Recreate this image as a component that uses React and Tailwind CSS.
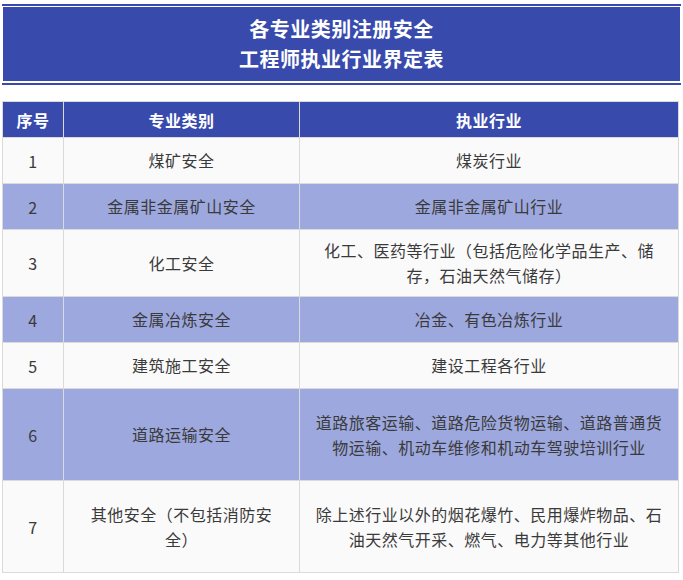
import React from 'react';

const rows = [
  { no: '1', type: ['煤矿安全'], scope: ['煤炭行业'], h: 'h-[46px]', alt: false },
  { no: '2', type: ['金属非金属矿山安全'], scope: ['金属非金属矿山行业'], h: 'h-[46px]', alt: true },
  {
    no: '3',
    type: ['化工安全'],
    scope: ['化工、医药等行业（包括危险化学品生产、储', '存，石油天然气储存）'],
    h: 'h-[67px]',
    alt: false,
  },
  { no: '4', type: ['金属冶炼安全'], scope: ['冶金、有色冶炼行业'], h: 'h-[46px]', alt: true },
  { no: '5', type: ['建筑施工安全'], scope: ['建设工程各行业'], h: 'h-[46px]', alt: false },
  {
    no: '6',
    type: ['道路运输安全'],
    scope: ['道路旅客运输、道路危险货物运输、道路普通货', '物运输、机动车维修和机动车驾驶培训行业'],
    h: 'h-[92px]',
    alt: true,
  },
  {
    no: '7',
    type: ['其他安全（不包括消防安', '全）'],
    scope: ['除上述行业以外的烟花爆竹、民用爆炸物品、石', '油天然气开采、燃气、电力等其他行业'],
    h: 'h-[92px]',
    alt: false,
  },
];

const Lines = ({ lines }) => (
  <div className="leading-[25px]">
    {lines.map((l, i) => (
      <div key={i}>{l}</div>
    ))}
  </div>
);

const Cell = ({ children, className = '' }) => (
  <div className={`flex items-center justify-center text-center border-r border-b border-[#dadada] ${className}`}>
    {children}
  </div>
);

const App = () => {
  return (
    <div className="min-h-[580px] bg-white pt-[4px] font-['Noto_Sans_CJK_SC','Noto_Sans',sans-serif]">
      {/* title */}
      <div className="mx-[2px] border-y-2 border-[#384bad] pt-px pb-[2px] px-px">
        <div className="bg-[#384bad] py-[7px] text-center text-white font-bold text-[20px] leading-[30px] tracking-[0.5px]">
          <div>各专业类别注册安全</div>
          <div>工程师执业行业界定表</div>
        </div>
      </div>

      {/* table */}
      <div className="mx-[2px] mt-[16px] w-[677px] grid grid-cols-[61px_236px_379px] border-l border-t border-[#dadada] text-[16px] tracking-[0.5px] text-[#3a3a3a]">
        <Cell className="h-[36px] bg-[#384bad] text-white font-bold">序号</Cell>
        <Cell className="h-[36px] bg-[#384bad] text-white font-bold">专业类别</Cell>
        <Cell className="h-[36px] bg-[#384bad] text-white font-bold">执业行业</Cell>
        {rows.map((r) => {
          const bg = r.alt ? 'bg-[#9da8df]' : 'bg-[#fafafa]';
          return (
            <React.Fragment key={r.no}>
              <Cell className={`${r.h} ${bg}`}>{r.no}</Cell>
              <Cell className={`${r.h} ${bg}`}>
                <Lines lines={r.type} />
              </Cell>
              <Cell className={`${r.h} ${bg}`}>
                <Lines lines={r.scope} />
              </Cell>
            </React.Fragment>
          );
        })}
      </div>
    </div>
  );
};

export default App;
